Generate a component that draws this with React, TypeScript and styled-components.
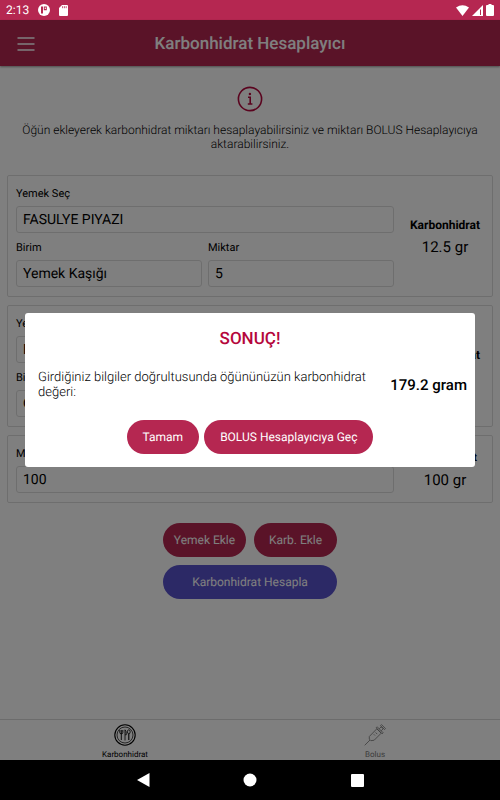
import React from "react";
import styled, { createGlobalStyle } from "styled-components";

const crimson = "#b52751";
const accent = "#b5073c";

const GlobalStyle = createGlobalStyle`
  *, *::before, *::after { box-sizing: border-box; }
  body { margin: 0; background: #fff; text-rendering: geometricPrecision; }
  body, button, input, select { font-family: Roboto, "Noto Sans", sans-serif; }
  button, input, select { text-rendering: inherit; }
`;

const Device = styled.div`
  display: flex;
  flex-direction: column;
  min-height: 100vh;
  color: #000;
`;

const StatusBar = styled.div`
  display: flex;
  align-items: center;
  justify-content: space-between;
  height: 20px;
  padding: 0 6px;
  background: ${crimson};
  color: #fff;
  font-size: 12px;
  line-height: 20px;
`;

const StatusGroup = styled.div<{ $gap: number }>`
  display: flex;
  align-items: center;
  gap: ${(p) => p.$gap}px;
`;

const Screen = styled.div`
  position: relative;
  flex: 1;
  display: flex;
  flex-direction: column;
  background: #fff;
`;

const Header = styled.header`
  display: grid;
  grid-template-columns: 32px 1fr 32px;
  align-items: center;
  height: 46px;
  padding: 2px 10px 0;
  background: ${crimson};
  color: #fff;
  box-shadow: 0 1px 2px rgba(0, 0, 0, 0.4);
`;

const MenuButton = styled.button`
  display: flex;
  align-items: center;
  justify-content: center;
  height: 32px;
  padding: 0;
  border: 0;
  background: none;
  color: inherit;
`;

const HeaderTitle = styled.h1`
  margin: 0;
  text-align: center;
  font-size: 17px;
  font-weight: 500;
  line-height: 22px;
`;

const Content = styled.main`
  flex: 1;
  padding: 20px 7px;
`;

const Intro = styled.div`
  display: flex;
  flex-direction: column;
  align-items: center;
  gap: 11px;
  padding: 0 8px;
  margin-bottom: 24px;
  color: ${accent};
`;

const IntroText = styled.p`
  margin: 0;
  color: #000;
  text-align: center;
  font-size: 12px;
  font-weight: 300;
  line-height: 14px;
`;

const CardList = styled.div`
  display: grid;
  gap: 8px;
`;

const Card = styled.section`
  display: flex;
  align-items: center;
  min-width: 0;
  padding: 9px 0 9px 8px;
  border: 1px solid #ddd;
  border-radius: 2px;
`;

const Fields = styled.div`
  flex: 1;
  display: grid;
  grid-template-columns: 1fr 1fr;
  gap: 6px;
`;

const Field = styled.label<{ $wide?: boolean }>`
  display: grid;
  gap: 3px;
  grid-column: ${(p) => (p.$wide ? "1 / -1" : "auto")};
  font-size: 11px;
  line-height: 18px;
`;

const controlStyle = `
  appearance: none;
  width: 100%;
  height: 27px;
  padding: 1px 6px 0;
  border: 1px solid #ddd;
  border-radius: 3px;
  background: transparent;
  color: #000;
  font-size: 14px;
  opacity: 1;
`;

const Select = styled.select`
  ${controlStyle}
`;

const Input = styled.input`
  ${controlStyle}
`;

const Carb = styled.div`
  flex: 0 0 98px;
  padding-left: 4px;
  text-align: center;
  font-size: 15px;
  line-height: 22px;
`;

const CarbLabel = styled.div<{ $small?: boolean }>`
  font-size: ${(p) => (p.$small ? 11 : 12)}px;
  font-weight: 700;
`;

const Actions = styled.div`
  display: grid;
  grid-template-columns: 83px 83px;
  justify-content: center;
  gap: 8px;
  margin-top: 20px;
`;

const Pill = styled.button<{ $tone?: "indigo"; $span?: boolean }>`
  height: 34px;
  padding: 0 16px;
  border: 0;
  border-radius: 17px;
  background: ${(p) => (p.$tone ? "#5952cc" : crimson)};
  color: #fff;
  font-size: 12px;
  line-height: 14px;
  white-space: nowrap;
  grid-column: ${(p) => (p.$span ? "1 / -1" : "auto")};
`;

const ShortPill = styled(Pill)`
  padding: 0;
`;

const TabBar = styled.nav`
  display: grid;
  grid-template-columns: 1fr 1fr;
  height: 41px;
  border-top: 1px solid #d8d8d8;
`;

const Tab = styled.a<{ $active?: boolean }>`
  display: flex;
  flex-direction: column;
  align-items: center;
  justify-content: flex-end;
  gap: 4px;
  color: ${(p) => (p.$active ? "#000" : "#777")};
  font-size: 8px;
  line-height: 10px;
  text-decoration: none;
`;

const Backdrop = styled.div`
  position: absolute;
  inset: 0;
  display: flex;
  align-items: center;
  justify-content: center;
  padding: 0 25px;
  background: rgba(0, 0, 0, 0.5);
`;

const Dialog = styled.div`
  flex: 1;
  padding: 15px 0 13px;
  border-radius: 3px;
  background: #fff;
`;

const DialogTitle = styled.h2`
  margin: 0;
  color: ${accent};
  text-align: center;
  font-size: 17px;
  font-weight: 500;
  line-height: 22px;
`;

const Result = styled.div`
  display: flex;
  align-items: center;
  justify-content: space-between;
  gap: 20px;
  margin: 20px 0;
  padding: 0 8px 0 13px;
  font-size: 13px;
  font-weight: 300;
  line-height: 15px;
`;

const ResultText = styled.p`
  flex: 1;
  margin: 0;
`;

const ResultValue = styled.strong`
  font-size: 15px;
  font-weight: 500;
  white-space: nowrap;
`;

const DialogActions = styled.div`
  display: flex;
  justify-content: center;
  gap: 5px;
`;

const SystemBar = styled.div`
  display: grid;
  grid-template-columns: repeat(3, 107px);
  justify-content: center;
  height: 40px;
  background: #000;
  color: #fff;
`;

const SystemButton = styled.button`
  display: flex;
  align-items: center;
  justify-content: center;
  padding: 0;
  border: 0;
  background: none;
  color: inherit;
`;

const PlateIcon = () => (
  <svg width="22" height="22" viewBox="0 0 22 22" fill="none" stroke="currentColor" aria-hidden="true">
    <circle cx="11" cy="11" r="10.2" strokeWidth="1.1" />
    <circle cx="11" cy="11" r="8" strokeWidth="0.7" />
    <path d="M5.800 6v2.600q0 1.200 1.500 1.200t1.500-1.200V6M7.300 6v10" strokeWidth="0.9" />
    <path d="M11 16.500V5.800q1.500 1.200 1.300 5H11" strokeWidth="0.8" />
    <ellipse cx="14.800" cy="7.800" rx="1.400" ry="2" strokeWidth="0.800" />
    <path d="M14.800 9.800V16" strokeWidth="1.100" />
  </svg>
);

const SyringeIcon = () => (
  <svg width="22" height="22" viewBox="0 0 22 22" fill="none" stroke="currentColor" strokeWidth="0.8" strokeLinejoin="round" aria-hidden="true">
    <path d="M.7 21.3 6 16M5.300 12.500 5.300 15.100l1.600 1.600 3.300-.500 7-7-4.400-4.400z" />
    <path d="m12.200 3.800 6 6 1-1-6-6zM15.200 4.800l2-2 2 2-2 2M16.500 1.600l4 4 1-1-4-4z" />
    <path d="m11.600 8.500 1.600 1.600M9.800 10.300l1.200 1.200" />
  </svg>
);

export default function App() {
  return (
    <Device>
      <GlobalStyle />
      <StatusBar>
        <StatusGroup $gap={9}>
          <span>2:13</span>
          <svg width="12" height="12" viewBox="0 0 12 12" aria-hidden="true">
            <circle cx="6" cy="6" r="6" fill="#fff" />
            <path d="M3 2.500h2V9.500H3zM5.800 2.500h3v3.700h-3z" fill={crimson} />
            <path d="M6.800 3.500h1v1.500h-1z" fill="#fff" />
          </svg>
          <svg width="9" height="11" viewBox="0 0 9 11" aria-hidden="true">
            <path d="M3 0h5q1 0 1 1v9q0 1-1 1H1q-1 0-1-1V3z" fill="#fff" />
            <path d="M3.600 1.200v2M5.400 1.200v2M7.200 1.200v2" stroke={crimson} strokeWidth=".8" />
          </svg>
        </StatusGroup>
        <StatusGroup $gap={3}>
          <svg width="13" height="11" viewBox="0 0 13 11" fill="#fff" aria-hidden="true">
            <path d="M0 2.500Q6.500-2 13 2.500L6.500 11z" />
          </svg>
          <svg width="11" height="11" viewBox="0 0 11 11" aria-hidden="true">
            <path d="M11 0v11H0z" fill="#fff" />
            <path d="M8.500 4.500V10" stroke={crimson} strokeWidth="1" />
          </svg>
          <svg width="8" height="12" viewBox="0 0 8 12" fill="#fff" aria-hidden="true">
            <path d="M2.500 0h3v1H7q1 0 1 1v9q0 1-1 1H1q-1 0-1-1V2q0-1 1-1h1.500z" />
          </svg>
        </StatusGroup>
      </StatusBar>

      <Screen>
        <Header>
          <MenuButton aria-label="Menü">
            <svg width="18" height="14" viewBox="0 0 18 14" stroke="currentColor" strokeWidth="1.300" aria-hidden="true">
              <path d="M.5 1h17M.5 7h17M.5 13h17" />
            </svg>
          </MenuButton>
          <HeaderTitle>Karbonhidrat Hesaplayıcı</HeaderTitle>
        </Header>

        <Content>
          <Intro>
            <svg width="26" height="26" viewBox="0 0 26 26" fill="none" stroke="currentColor" aria-hidden="true">
              <circle cx="13" cy="13" r="11.600" strokeWidth="1.600" />
              <path d="M11 11.200h2.200V18M10.800 18h4.600" strokeWidth="1.600" />
              <circle cx="12.900" cy="8" r="1.200" fill="currentColor" stroke="none" />
            </svg>
            <IntroText>
              Öğün ekleyerek karbonhidrat miktarı hesaplayabilirsiniz ve miktarı BOLUS Hesaplayıcıya
              aktarabilirsiniz.
            </IntroText>
          </Intro>

          <CardList>
            <Card>
              <Fields>
                <Field $wide>
                  Yemek Seç
                  <Select><option>FASULYE PIYAZI</option></Select>
                </Field>
                <Field>
                  Birim
                  <Select><option>Yemek Kaşığı</option></Select>
                </Field>
                <Field>
                  Miktar
                  <Input defaultValue="5" />
                </Field>
              </Fields>
              <Carb>
                <CarbLabel>Karbonhidrat</CarbLabel>
                12.5 gr
              </Carb>
            </Card>
            <Card>
              <Fields>
                <Field $wide>
                  Yemek Seç
                  <Select><option>PIRINÇ PILAVI</option></Select>
                </Field>
                <Field>
                  Birim
                  <Select><option>Orta Boy</option></Select>
                </Field>
                <Field>
                  Miktar
                  <Input defaultValue="1" />
                </Field>
              </Fields>
              <Carb>
                <CarbLabel>Karbonhidrat</CarbLabel>
                66.7 gr
              </Carb>
            </Card>
            <Card>
              <Fields>
                <Field $wide>
                  Miktar
                  <Input defaultValue="100" />
                </Field>
              </Fields>
              <Carb>
                <CarbLabel $small>Karbonhidrat</CarbLabel>
                100 gr
              </Carb>
            </Card>
          </CardList>

          <Actions>
            <ShortPill>Yemek Ekle</ShortPill>
            <ShortPill>Karb. Ekle</ShortPill>
            <Pill $tone="indigo" $span>Karbonhidrat Hesapla</Pill>
          </Actions>
        </Content>

        <TabBar>
          <Tab href="#karbonhidrat" $active>
            <PlateIcon />
            Karbonhidrat
          </Tab>
          <Tab href="#bolus">
            <SyringeIcon />
            Bolus
          </Tab>
        </TabBar>

        <Backdrop>
          <Dialog role="dialog" aria-modal="true" aria-labelledby="result-title">
            <DialogTitle id="result-title">SONUÇ!</DialogTitle>
            <Result>
              <ResultText>Girdiğiniz bilgiler doğrultusunda öğününüzün karbonhidrat değeri:</ResultText>
              <ResultValue>179.2 gram</ResultValue>
            </Result>
            <DialogActions>
              <Pill>Tamam</Pill>
              <Pill>BOLUS Hesaplayıcıya Geç</Pill>
            </DialogActions>
          </Dialog>
        </Backdrop>
      </Screen>

      <SystemBar>
        <SystemButton aria-label="Geri">
          <svg width="13" height="14" viewBox="0 0 13 14" fill="currentColor" aria-hidden="true">
            <path d="M12.500 0v14L0 7z" />
          </svg>
        </SystemButton>
        <SystemButton aria-label="Ana ekran">
          <svg width="14" height="14" viewBox="0 0 14 14" fill="currentColor" aria-hidden="true">
            <circle cx="7" cy="7" r="6.500" />
          </svg>
        </SystemButton>
        <SystemButton aria-label="Son uygulamalar">
          <svg width="13" height="13" viewBox="0 0 13 13" fill="currentColor" aria-hidden="true">
            <rect width="13" height="13" rx="1" />
          </svg>
        </SystemButton>
      </SystemBar>
    </Device>
  );
}
